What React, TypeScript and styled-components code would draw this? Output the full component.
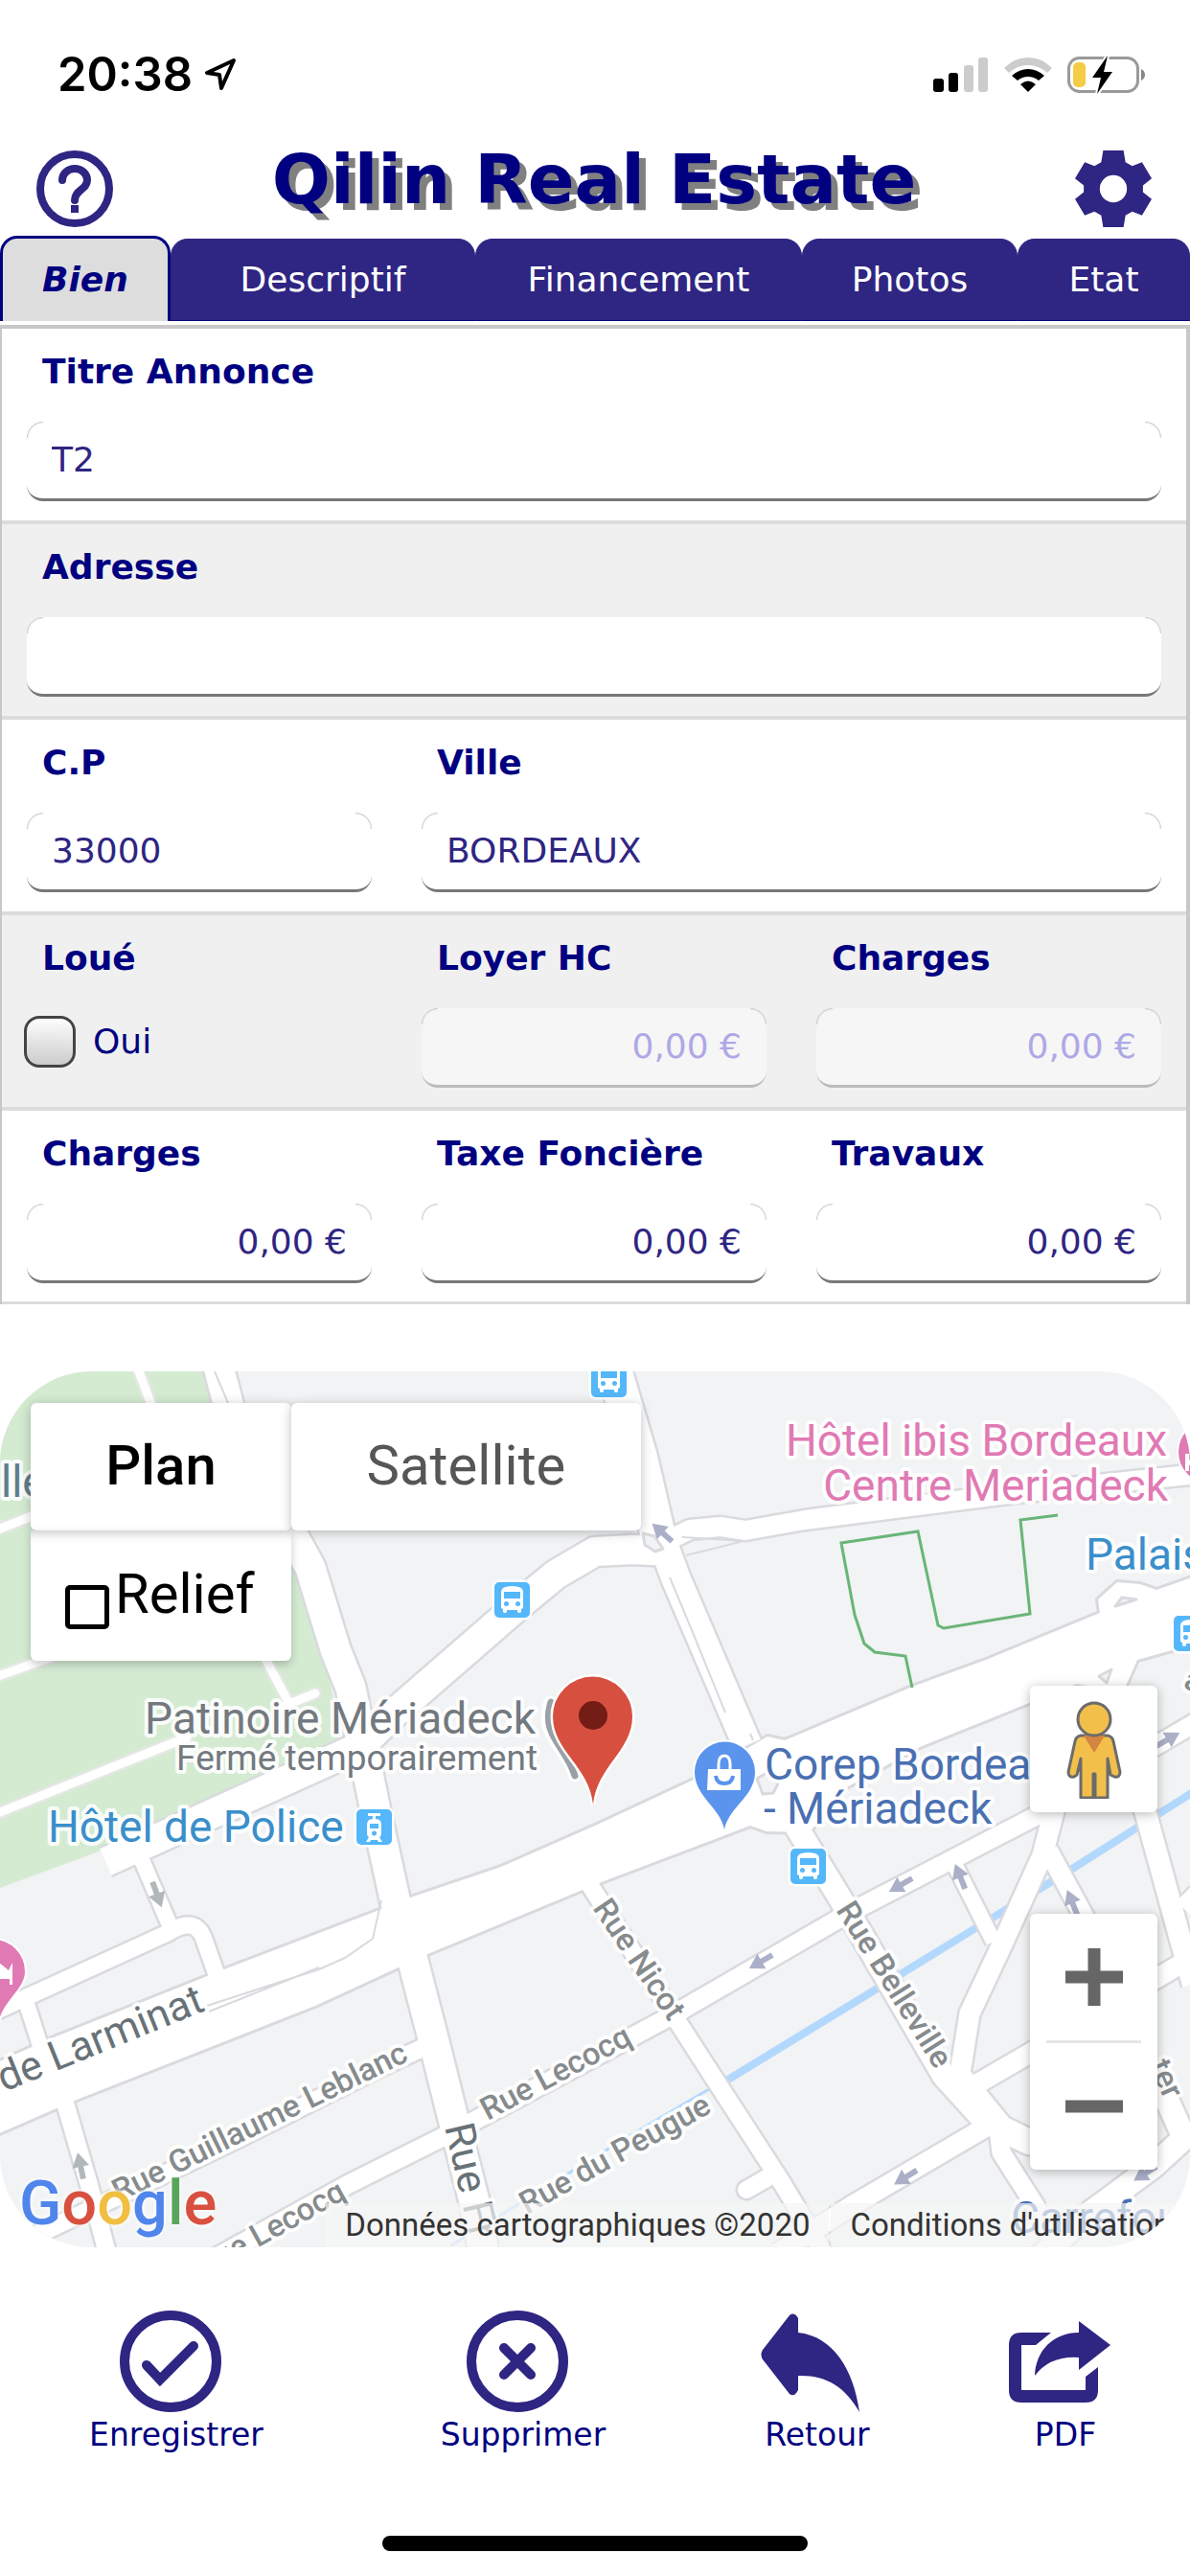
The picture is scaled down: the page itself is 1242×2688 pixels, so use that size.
import React, { useState } from "react";
import styled, { createGlobalStyle } from "styled-components";

const navy = "#000080";
const indigo = "#2f2582";
const sans = `"DejaVu Sans", Verdana, sans-serif`;
const roboto = `Roboto, "Liberation Sans", sans-serif`;

const GlobalStyle = createGlobalStyle`
  *, *::before, *::after { box-sizing: border-box; }
  body { margin: 0; background: #fff; font-family: ${sans}; }
  button, input { font: inherit; margin: 0; }
  button { border: 0; background: none; padding: 0; cursor: pointer; }
  svg { display: block; }
`;

const Page = styled.div`
  display: flex;
  flex-direction: column;
`;

/* ---------- status bar ---------- */

const StatusBar = styled.div`
  display: flex;
  align-items: center;
  justify-content: space-between;
  height: 156px;
  padding: 0 46px 0 60px;
`;

const StatusGroup = styled.div<{ $gap: number }>`
  display: flex;
  align-items: center;
  gap: ${(p) => p.$gap}px;
`;

const Clock = styled.span`
  font: 600 49px/60px Inter, "Liberation Sans", sans-serif;
  color: #000;
`;

/* ---------- header ---------- */

const Header = styled.header`
  display: flex;
  align-items: center;
  justify-content: space-between;
  height: 90px;
  padding: 0 40px 8px 38px;
`;

const IconButton = styled.button`
  width: 80px;
  height: 80px;
  color: ${indigo};
`;

const Title = styled.h1`
  margin: 0;
  padding-bottom: 20px;
  font-size: 72px;
  line-height: 84px;
  font-weight: 700;
  color: ${navy};
  text-shadow: 7px 7px 0 #808080;
  white-space: nowrap;
`;

/* ---------- tabs ---------- */

const Tabs = styled.nav`
  display: grid;
  grid-template-columns: 178fr 318fr 341fr 225fr 180fr;
  align-items: end;
  height: 89px;
`;

const Tab = styled.button<{ $active: boolean }>`
  height: ${(p) => (p.$active ? 89 : 86)}px;
  border: ${(p) => (p.$active ? 3 : 1)}px solid ${(p) => (p.$active ? navy : indigo)};
  border-bottom: ${(p) => (p.$active ? "0" : `1px solid ${navy}`)};
  border-radius: 18px 18px 0 0;
  background: ${(p) => (p.$active ? "#dddddd" : indigo)};
  color: ${(p) => (p.$active ? navy : "#fff")};
  font-size: 36px;
  line-height: 44px;
  font-weight: ${(p) => (p.$active ? 700 : 400)};
  font-style: ${(p) => (p.$active ? "italic" : "normal")};
`;

/* ---------- form ---------- */

const Form = styled.form`
  margin-top: 4px;
  border-style: solid;
  border-color: #c8c8c8;
  border-width: 4px 4px 0 2px;
`;

const Row = styled.div<{ $shaded: boolean }>`
  display: grid;
  grid-template-columns: repeat(3, 1fr);
  height: 204px;
  border-bottom: 4px solid #dcdcdc;
  background: ${(p) => (p.$shaded ? "#f0f0f0" : "#fff")};

  &:last-child {
    height: 202px;
    border-bottom-width: 3px;
  }
`;

const Cell = styled.div<{ $span: number }>`
  grid-column: span ${(p) => p.$span};
  display: flex;
  flex-direction: column;
  padding: 23px 26px 0;
`;

const Label = styled.label`
  padding: 0 16px;
  font-size: 36px;
  line-height: 44px;
  font-weight: 700;
  color: ${navy};
`;

const TextBox = styled.input<{ $right: boolean }>`
  width: 100%;
  height: 83px;
  margin-top: 30px;
  padding: 0 26px 2px;
  border: 0 solid #777;
  border-bottom-width: 3px;
  border-radius: 17px;
  background:
    radial-gradient(circle at 17px 17px, transparent 15px, #c4c4c4 17px) 0 0 / 17px 17px no-repeat,
    radial-gradient(circle at 0 17px, transparent 15px, #c4c4c4 17px) 100% 0 / 17px 17px no-repeat,
    #fff;
  color: ${indigo};
  font-size: 36px;
  text-align: ${(p) => (p.$right ? "right" : "left")};
  outline: none;

  &:disabled {
    background-color: #f6f6f6;
    border-color: #bbb;
    color: #aea8e6;
  }
`;

const CheckLabel = styled.label`
  display: flex;
  align-items: center;
  gap: 18px;
  margin-top: 30px;
  padding-top: 8px;
  font-size: 36px;
  line-height: 54px;
  color: ${navy};
`;

const CheckBox = styled.input`
  appearance: none;
  width: 54px;
  height: 54px;
  margin-left: -3px;
  border: 3px solid #444;
  border-radius: 16px;
  background: linear-gradient(#fdfdfd, #cccccc);

  &:checked { background: ${indigo}; }
`;

/* ---------- map ---------- */

const MapFrame = styled.section`
  position: relative;
  height: 914px;
  margin-top: 70px;
  border-radius: 96px;
  overflow: hidden;
  background: #f1f3f4;
  font-family: ${roboto};
`;

const MapCanvas = styled.svg`
  width: 100%;
  height: 100%;
`;

const MapTypes = styled.div`
  position: absolute;
  top: 33px;
  left: 32px;
  display: grid;
  grid-template-columns: 272px 365px;
`;

const MapType = styled.button<{ $active: boolean }>`
  height: 133px;
  padding-bottom: 4px;
  background: #fff;
  border-radius: 6px;
  box-shadow: 0 2px 12px rgba(0, 0, 0, 0.25);
  font-size: 58px;
  font-weight: ${(p) => (p.$active ? 500 : 400)};
  color: ${(p) => (p.$active ? "#000" : "#565656")};
`;

const Relief = styled.label`
  display: flex;
  align-items: center;
  gap: 6px;
  height: 136px;
  padding: 0 0 4px 36px;
  background: #fff;
  border-radius: 0 0 6px 6px;
  box-shadow: 0 4px 10px rgba(0, 0, 0, 0.22), inset 0 12px 12px -10px rgba(0, 0, 0, 0.25);
  font-size: 58px;
  color: #000;
`;

const ReliefBox = styled.input`
  appearance: none;
  width: 46px;
  height: 46px;
  margin: 28px 0 0;
  border: 5px solid #000;
  border-radius: 5px;

  &:checked { background: #000; }
`;

const MapTools = styled.div`
  position: absolute;
  top: 328px;
  right: 34px;
  width: 133px;
  display: flex;
  flex-direction: column;
  gap: 106px;
`;

const ToolCard = styled.div`
  display: flex;
  flex-direction: column;
  align-items: center;
  background: #fff;
  border-radius: 6px;
  box-shadow: 0 2px 12px rgba(0, 0, 0, 0.28);
`;

const ToolButton = styled.button`
  display: grid;
  place-items: center;
  width: 132px;
  height: 132px;
`;

const ToolRule = styled.hr`
  width: 99px;
  height: 3px;
  margin: 0;
  border: 0;
  background: #e6e6e6;
`;

const GoogleMark = styled.a`
  position: absolute;
  left: 20px;
  bottom: 10px;
  font-size: 65px;
  line-height: 72px;
  font-weight: 500;
  text-decoration: none;
  text-shadow: 0 0 4px #fff, 0 0 6px #fff;
`;

const Letter = styled.span<{ $color: string }>`
  color: ${(p) => p.$color};
`;

const Credits = styled.div`
  position: absolute;
  right: 0;
  bottom: 0;
  display: flex;
  gap: 2px;
  font-size: 33px;
  line-height: 46px;
  color: #333;
  white-space: nowrap;
`;

const Credit = styled.span`
  padding: 0 20px;
  background: rgba(245, 245, 245, 0.7);
`;

const CreditLink = styled.a`
  padding: 0 20px;
  background: rgba(245, 245, 245, 0.7);
  color: inherit;
  text-decoration: none;
`;

/* ---------- bottom actions ---------- */

const Actions = styled.footer`
  display: grid;
  grid-template-columns: 368fr 356fr 258fr 260fr;
  margin-top: 66px;
`;

const Action = styled.button`
  display: flex;
  flex-direction: column;
  align-items: center;
  gap: 2px;
  color: ${navy};
  font-size: 33px;
  line-height: 44px;
`;

const ActionIcon = styled.svg`
  width: 106px;
  height: 106px;
  margin-right: 12px;
  color: ${indigo};
`;

const HomeIndicator = styled.div`
  align-self: center;
  width: 444px;
  height: 16px;
  margin: 83px 0 25px;
  border-radius: 8px;
  background: #000;
`;

/* ---------- data ---------- */

type Field = {
  id: string;
  label: string;
  kind?: "text" | "money" | "check";
  value?: string;
  span?: number;
  disabled?: boolean;
};

const rows: Field[][] = [
  [{ id: "titre", label: "Titre Annonce", value: "T2", span: 3 }],
  [{ id: "adresse", label: "Adresse", value: "", span: 3 }],
  [
    { id: "cp", label: "C.P", value: "33000" },
    { id: "ville", label: "Ville", value: "BORDEAUX", span: 2 },
  ],
  [
    { id: "loue", label: "Loué", kind: "check" },
    { id: "loyer", label: "Loyer HC", kind: "money", disabled: true },
    { id: "charges-locataire", label: "Charges", kind: "money", disabled: true },
  ],
  [
    { id: "charges", label: "Charges", kind: "money" },
    { id: "taxe", label: "Taxe Foncière", kind: "money" },
    { id: "travaux", label: "Travaux", kind: "money" },
  ],
];

const tabs = ["Bien", "Descriptif", "Financement", "Photos", "Etat"];

/* ---------- map drawing ---------- */

const avenue =
  "M-5 722 51 697 234 624 396 562 428 549 523 517 621 474 722 427 801 381 819 385 952 329 1029 301 1148 252 1146 238 1166 220 1190 222 1207 228 1250 213V282L1223 291 1187 301 1172 335 1124 326 1074 346 960 392 880 436 845 481 800 480 783 474 625 534 608 541 444 609 418 621 329 662 75 762-5 797Z";

const roads: [string, number][] = [
  ["M228-5 245 60 324 205 350 290 366 330 392 459 413 555 431 615 452 696 473 780 495 866 505 920", 31],
  ["M640-5 668 90 690 185", 36],
  ["M694 185 705 215 780 390", 30],
  ["M700 188 660 186 621 188 580 212 540 245 410 358 375 392 150 494 110 512", 30],
  ["M690 180 720 165 752 162 778 166 840 155 1060 127 1250 107", 20],
  ["M828 470 880 555 985 735 1035 790", 24],
  ["M1042 790 1045 815 1080 870 1104 920", 19],
  ["M1250 365 1085 462 888 564 705 670 640 705 480 790 364 848 225 925", 19],
  ["M615 535 703 672 752 748 815 845 860 920", 18],
  ["M445 704 400 725 250 800 100 872 30 905", 18],
  ["M67 760 93 849 112 920", 18],
  ["M-5 668 30 652 175 586Q202 568 212 590L228 635", 17],
  ["M142 496 178 580", 16],
  ["M28 660 44 710", 16],
  ["M1101 455 1088 505 1045 600 1012 670 1000 745", 21],
  ["M995 512 1037 595", 16],
  ["M1094 500 1132 570 1170 640", 20],
  ["M1190 440 1245 640", 22],
  ["M1235 560 1250 545", 20],
  ["M1012 748 1074 712 1250 608", 20],
  ["M1035 785 890 870 812 920", 20],
  ["M1000 735 1045 790 1074 804 1130 800", 26],
  ["M1200 720 1236 800 1203 830 1130 884 1085 925", 24],
];

const parkPaths = "M143-5 158 35M-5 166 36 150M-5 319 60 296M277 300 301 345M295 350 329 336M-5 462 195 382";

const Roads = ({ casing }: { casing: boolean }) => (
  <g fill="none" stroke={casing ? "#d9dade" : "#fff"} strokeLinejoin="round">
    <path d={avenue} fill="#fff" strokeWidth={casing ? 6 : 0} />
    {roads.map(([d, w]) => (
      <path key={d} d={d} strokeWidth={casing ? w + 5 : w} />
    ))}
    <path d="M779 854 807 838" strokeLinecap="round" strokeWidth={casing ? 23 : 18} />
  </g>
);

const arrows: [number, number, number, string][] = [
  [691, 168, -48, "#abb0c8"],
  [1219, 384, 60, "#abb0c8"],
  [940, 536, -120, "#abb0c8"],
  [794, 616, -120, "#abb0c8"],
  [1002, 527, -22, "#abb0c8"],
  [1119, 554, -22, "#abb0c8"],
  [945, 841, -122, "#abb0c8"],
  [1195, 837, -122, "#abb0c8"],
  [164, 546, 160, "#b1b8b9"],
  [84, 829, -12, "#b1b8b9"],
];

type MapText = { t: string; x: number; y: number; s: number; c: string; r?: number; end?: boolean };

const mapTexts: MapText[] = [
  { t: "lle", x: 1, y: 131, s: 46, c: "#5f7d8c" },
  { t: "Patinoire Mériadeck", x: 559, y: 378, s: 46, c: "#73797f", end: true },
  { t: "Fermé temporairement", x: 561, y: 416, s: 37, c: "#73797f", end: true },
  { t: "Hôtel de Police", x: 50, y: 491, s: 46, c: "#3a8fcb" },
  { t: "Hôtel ibis Bordeaux", x: 1218, y: 88, s: 46, c: "#e07ab4", end: true },
  { t: "Centre Meriadeck", x: 1219, y: 135, s: 46, c: "#e07ab4", end: true },
  { t: "Palais", x: 1133, y: 207, s: 46, c: "#3a8fcb" },
  { t: "Corep Bordeaux", x: 798, y: 426, s: 46, c: "#4a70b2" },
  { t: "- Mériadeck", x: 797, y: 472, s: 46, c: "#4a70b2" },
  { t: "de Larminat", x: 4, y: 752, s: 43, c: "#687277", r: -22 },
  { t: "Rue Guillaume Leblanc", x: 124, y: 867, s: 33, c: "#868b8d", r: -26 },
  { t: "Rue Lecocq", x: 509, y: 782, s: 33, c: "#868b8d", r: -28 },
  { t: "Rue Lecocq", x: 212, y: 946, s: 33, c: "#868b8d", r: -29 },
  { t: "Rue Fr", x: 464, y: 788, s: 43, c: "#687277", r: 77 },
  { t: "Rue du Peugue", x: 550, y: 880, s: 33, c: "#868b8d", r: -29 },
  { t: "Rue Nicot", x: 618, y: 560, s: 33, c: "#868b8d", r: 56 },
  { t: "Rue Belleville", x: 872, y: 562, s: 33, c: "#868b8d", r: 58 },
  { t: "ter", x: 1199, y: 724, s: 33, c: "#868b8d", r: 66 },
  { t: "a", x: 1234, y: 330, s: 33, c: "#868b8d", r: 20 },
  { t: "Carrefour", x: 1055, y: 899, s: 46, c: "#4a70b2" },
];

const Stop = ({ x, y, tram = false }: { x: number; y: number; tram?: boolean }) => (
  <g transform={`translate(${x} ${y})`}>
    <rect width="37" height="37" rx="5" fill="#54b7fa" stroke="#fff" strokeWidth="5" paintOrder="stroke" />
    {tram ? (
      <>
        <path d="M12 4H25V7H20V10Q26 10 26 16V25Q26 28 24 29L27 34H23L22 32H15L14 34H10L13 29Q11 28 11 25V16Q11 10 17 10V7H12Z" fill="#fff" />
        <rect x="14" y="15" width="9" height="5" fill="#54b7fa" />
        <circle cx="18.5" cy="25" r="2.5" fill="#54b7fa" />
      </>
    ) : (
      <>
        <path d="M7 10Q7 4 18.500 4T30 10V27L28 28V31Q26 33 24 31V29H13V31Q11 33 9 31V28L7 27Z" fill="#fff" />
        <rect x="10" y="10" width="17" height="7" fill="#54b7fa" />
        <circle cx="12.500" cy="22.500" r="2.500" fill="#54b7fa" />
        <circle cx="24.500" cy="22.500" r="2.500" fill="#54b7fa" />
      </>
    )}
  </g>
);

const MapDrawing = () => (
  <MapCanvas viewBox="0 0 1242 914" preserveAspectRatio="xMidYMid slice" role="img" aria-label="Carte du quartier Mériadeck">
    <path d="M0 0H213L240 60 304 190 330 255 352 360 356 389 200 456 119 495 0 539Z" fill="#d4ebd2" />
    <path d={parkPaths} stroke="#e4e8e3" strokeWidth="14" fill="none" strokeLinecap="round" />
    <path d={parkPaths} stroke="#fff" strokeWidth="9" fill="none" strokeLinecap="round" />
    <path d="M1250 436 1116 521 940 629 755 742" stroke="#b3d8fd" strokeWidth="8" fill="none" />
    <path d="M745 746 655 799 562 856 471 912" stroke="#b3d8fd" strokeWidth="3" fill="none" />
    <Roads casing />
    <Roads casing={false} />
    <g fill="none" stroke="#d9dade" strokeWidth="2">
      <path d="M224 0 238 33M398 552 389 592 360 612 333 624 216 662M333 622 218 668" />
      <path d="M699 215 722 270 757 356M783 378 786 385" />
      <path d="M716 192 776 177 712 173" />
    </g>
    <g fill="#f1f3f4" stroke="#d9dade" strokeWidth="3" strokeLinejoin="round">
      <path d="M671 169 683 172 692 185 684 188 673 181Z" />
      <path d="M1164 245 1171 236 1186 238Z" />
      <path d="M1147 318 1160 311 1155 325Z" />
      <path d="M790 425 800 419 812 430 807 440 796 441Z" />
    </g>
    <path
      d="M1104 150 1065 155 1075 253 985 268 979 265 958 167 878 179 892 254 902 284 913 293 945 297 952 330"
      fill="none"
      stroke="#69b578"
      strokeWidth="3"
    />
    {arrows.map(([x, y, r, c]) => (
      <path key={`${x}-${y}`} d="M0-14 9 1H3V14H-3V1H-9Z" fill={c} transform={`translate(${x} ${y}) rotate(${r})`} />
    ))}
    <g fontFamily={roboto} stroke="#fff" strokeWidth="8" strokeLinejoin="round" strokeOpacity="0.9" paintOrder="stroke">
      {mapTexts.map((m) => (
        <text
          key={`${m.t}-${m.x}`}
          fontSize={m.s}
          fontWeight={m.s < 36 ? 500 : 400}
          fill={m.c}
          textAnchor={m.end ? "end" : "start"}
          transform={`translate(${m.x} ${m.y}) rotate(${m.r ?? 0})`}
        >
          {m.t}
        </text>
      ))}
    </g>
    <Stop x={617} y={-10} />
    <Stop x={516} y={220} />
    <Stop x={825} y={498} />
    <Stop x={1225} y={255} />
    <Stop x={372} y={457} tram />

    {/* points of interest */}
    <g stroke="#fff" strokeWidth="4" paintOrder="stroke">
      <path d="M-40 626A33 33 0 0 1 26 626C26 645 4 655-2 680" fill="#e07ab4" />
      <circle cx="1263" cy="84" r="33" fill="#e07ab4" />
      <path d="M756 478C752 455 725 444 725 418A31 31 0 0 1 788 418C788 444 760 455 756 478Z" fill="#5b94ec" />
    </g>
    <path d="M-6 613 9 625 13 617V640H10V634H-6Z" fill="#fff" />
    <path d="M1237 86V104H1241V98H1250V92H1241V86Z" fill="#fff" />
    <path d="M739 415H773V437H738Z" fill="#fff" />
    <path d="M750 415V410Q750 401 756 401T762 410V415" fill="none" stroke="#fff" strokeWidth="3" />
    <path d="M747 422Q748 430 756 430T765 422" fill="none" stroke="#5b94ec" strokeWidth="4" />

    {/* property marker */}
    <path d="M574 345C562 380 590 390 600 422" fill="none" stroke="#fff" strokeWidth="13" strokeLinecap="round" />
    <path d="M575 345C564 380 590 390 600 422" fill="none" stroke="#9aa1a6" strokeWidth="7" strokeLinecap="round" />
    <path
      d="M619 452C615 412 577 396 577 360A41.500 41.500 0 0 1 660 360C660 396 623 412 619 452Z"
      fill="#d7503f"
      stroke="#fff"
      strokeWidth="5"
      paintOrder="stroke"
    />
    <circle cx="619" cy="359" r="15" fill="#741c16" />
  </MapCanvas>
);

const googleLetters: [string, string][] = [
  ["G", "#5086ec"],
  ["o", "#d8503f"],
  ["o", "#f1be42"],
  ["g", "#5086ec"],
  ["l", "#58a55c"],
  ["e", "#d8503f"],
];

/* ---------- icons ---------- */

const LocationIcon = () => (
  <svg width="34" height="36" viewBox="0 0 34 36" fill="none" stroke="#000" strokeWidth="4" strokeLinejoin="round">
    <path d="M31 3 3 16 16 18 18 32Z" />
  </svg>
);

const SignalIcon = () => (
  <svg width="58" height="36" viewBox="0 0 58 36">
    <rect y="22" width="11" height="14" rx="3" />
    <rect x="16" y="16" width="10" height="20" rx="3" />
    <rect x="32" y="8" width="10" height="28" rx="3" fill="#ccc" />
    <rect x="47" width="10" height="36" rx="3" fill="#ccc" />
  </svg>
);

const WifiIcon = () => (
  <svg width="50" height="36" viewBox="0 0 50 36">
    <path d="M0 11Q11 0 25 0T50 11L45 16Q36 8 25 8T5 16Z" fill="#ccc" />
    <path d="M8 19Q16 12 25 12T42 19L36 24Q31 20 25 20T14 24Z" />
    <path d="M17 28Q25 21 33 28L25 36Z" />
  </svg>
);

const BatteryIcon = () => (
  <svg width="82" height="40" viewBox="0 0 82 40">
    <rect x="1.500" y="2.500" width="72" height="35" rx="11" fill="none" stroke="#9a9a9a" strokeWidth="3" />
    <path d="M77 14Q81 16 81 20T77 26Z" fill="#888" />
    <rect x="6" y="7" width="13" height="26" rx="5" fill="#f5cc45" />
    <path d="M42 0 26 23H35L31 40 47 17H38Z" fill="#000" stroke="#fff" strokeWidth="4" paintOrder="stroke" />
  </svg>
);

const HelpIcon = () => (
  <svg width="80" height="80" viewBox="0 0 80 80" fill="none" stroke="currentColor" strokeWidth="8">
    <circle cx="40" cy="40" r="36" />
    <path d="M27 31A13 12 0 0 1 53 31C53 41 40 41 40 52" strokeLinecap="round" />
    <path d="M40 57V65" />
  </svg>
);

const GearIcon = () => (
  <svg width="80" height="80" viewBox="0 0 79 79" fill="currentColor">
    <path
      fillRule="evenodd"
      d="M29 0H50L52 12 59 16 69 12 79 29 70 36V43L79 50 69 67 59 63 52 67 50 79H29L27 67 20 63 10 67 0 50 9 43V36L0 29 10 12 20 16 27 12ZM39.500 25.500A14 14 0 1 0 39.500 53.500 14 14 0 1 0 39.500 25.500Z"
    />
  </svg>
);

const actions: { label: string; icon: React.ReactNode }[] = [
  {
    label: "Enregistrer",
    icon: (
      <g fill="none" stroke="currentColor" strokeWidth="10">
        <circle cx="53" cy="53" r="48" />
        <path d="M28 57 42 72 77 37" strokeLinecap="round" />
      </g>
    ),
  },
  {
    label: "Supprimer",
    icon: (
      <g fill="none" stroke="currentColor" strokeWidth="10">
        <circle cx="53" cy="53" r="48" />
        <path d="M39 39 67 67M67 39 39 67" strokeLinecap="round" />
      </g>
    ),
  },
  {
    label: "Retour",
    icon: (
      <path
        d="M2 41 30 5Q35 1 39 8V23C76 27 97 62 103 106C88 79 67 67 39 68V83Q35 91 30 87L2 51Q-1 46 2 41Z"
        fill="currentColor"
      />
    ),
  },
  {
    label: "PDF",
    icon: (
      <g fill="currentColor">
        <path d="M13 23H44L28 36H13V83H80V69L93 59V83Q93 96 80 96H13Q0 96 0 83V36Q0 23 13 23Z" />
        <path d="M73 11 106 36 73 62V49Q43 47 27 68C28 42 46 23 73 23Z" />
      </g>
    ),
  },
];

/* ---------- app ---------- */

const FieldCell = ({ field }: { field: Field }) => {
  const [value, setValue] = useState(field.value ?? "0,00 €");
  const [checked, setChecked] = useState(false);
  return (
    <Cell $span={field.span ?? 1}>
      <Label htmlFor={field.id}>{field.label}</Label>
      {field.kind === "check" ? (
        <CheckLabel>
          <CheckBox id={field.id} type="checkbox" checked={checked} onChange={(e) => setChecked(e.target.checked)} />
          Oui
        </CheckLabel>
      ) : (
        <TextBox
          id={field.id}
          type="text"
          $right={field.kind === "money"}
          value={value}
          disabled={field.disabled}
          onChange={(e) => setValue(e.target.value)}
        />
      )}
    </Cell>
  );
};

export default function App() {
  const [tab, setTab] = useState("Bien");
  const [mapType, setMapType] = useState("Plan");

  return (
    <Page>
      <GlobalStyle />
      <StatusBar>
        <StatusGroup $gap={12}>
          <Clock>20:38</Clock>
          <LocationIcon />
        </StatusGroup>
        <StatusGroup $gap={16}>
          <SignalIcon />
          <WifiIcon />
          <BatteryIcon />
        </StatusGroup>
      </StatusBar>

      <Header>
        <IconButton type="button" aria-label="Aide">
          <HelpIcon />
        </IconButton>
        <Title>Qilin Real Estate</Title>
        <IconButton type="button" aria-label="Réglages">
          <GearIcon />
        </IconButton>
      </Header>

      <Tabs>
        {tabs.map((t) => (
          <Tab key={t} type="button" $active={t === tab} onClick={() => setTab(t)}>
            {t}
          </Tab>
        ))}
      </Tabs>

      <Form>
        {rows.map((fields, i) => (
          <Row key={fields[0].id} $shaded={i % 2 === 1}>
            {fields.map((f) => (
              <FieldCell key={f.id} field={f} />
            ))}
          </Row>
        ))}
      </Form>

      <MapFrame>
        <MapDrawing />
        <GoogleMark href="#google" aria-label="Google">
          {googleLetters.map(([l, c], i) => (
            <Letter key={i} $color={c}>
              {l}
            </Letter>
          ))}
        </GoogleMark>
        <Credits>
          <Credit>Données cartographiques ©2020</Credit>
          <CreditLink href="#conditions">Conditions d'utilisation</CreditLink>
        </Credits>
        <MapTypes>
          {["Plan", "Satellite"].map((m) => (
            <MapType key={m} type="button" $active={m === mapType} onClick={() => setMapType(m)}>
              {m}
            </MapType>
          ))}
          <Relief>
            <ReliefBox type="checkbox" />
            Relief
          </Relief>
        </MapTypes>
        <MapTools>
          <ToolCard>
            <ToolButton type="button" aria-label="Street View">
              <svg width="60" height="104" viewBox="0 0 60 104" fill="#f3bf4b" stroke="#6b6b6b" strokeWidth="3" strokeLinejoin="round">
                <path d="M16 38H44Q49 39 50 44L57 76Q57 82 51 81L47 79 44 62V103H31V78H29V103H16V62L12 79 9 81Q3 82 3 76L10 44Q11 39 16 38Z" />
                <path d="M19 38H41L30 56Z" fill="#d48440" stroke="none" />
                <circle cx="30" cy="21" r="17" />
              </svg>
            </ToolButton>
          </ToolCard>
          <ToolCard>
            <ToolButton type="button" aria-label="Zoom avant">
              <svg width="60" height="60" viewBox="0 0 60 60" stroke="#666" strokeWidth="13">
                <path d="M30 0V60M0 30H60" />
              </svg>
            </ToolButton>
            <ToolRule />
            <ToolButton type="button" aria-label="Zoom arrière">
              <svg width="60" height="60" viewBox="0 0 60 60" stroke="#666" strokeWidth="13">
                <path d="M0 30H60" />
              </svg>
            </ToolButton>
          </ToolCard>
        </MapTools>
      </MapFrame>

      <Actions>
        {actions.map((a) => (
          <Action key={a.label} type="button">
            <ActionIcon viewBox="0 0 106 106" aria-hidden="true">
              {a.icon}
            </ActionIcon>
            {a.label}
          </Action>
        ))}
      </Actions>
      <HomeIndicator />
    </Page>
  );
}
